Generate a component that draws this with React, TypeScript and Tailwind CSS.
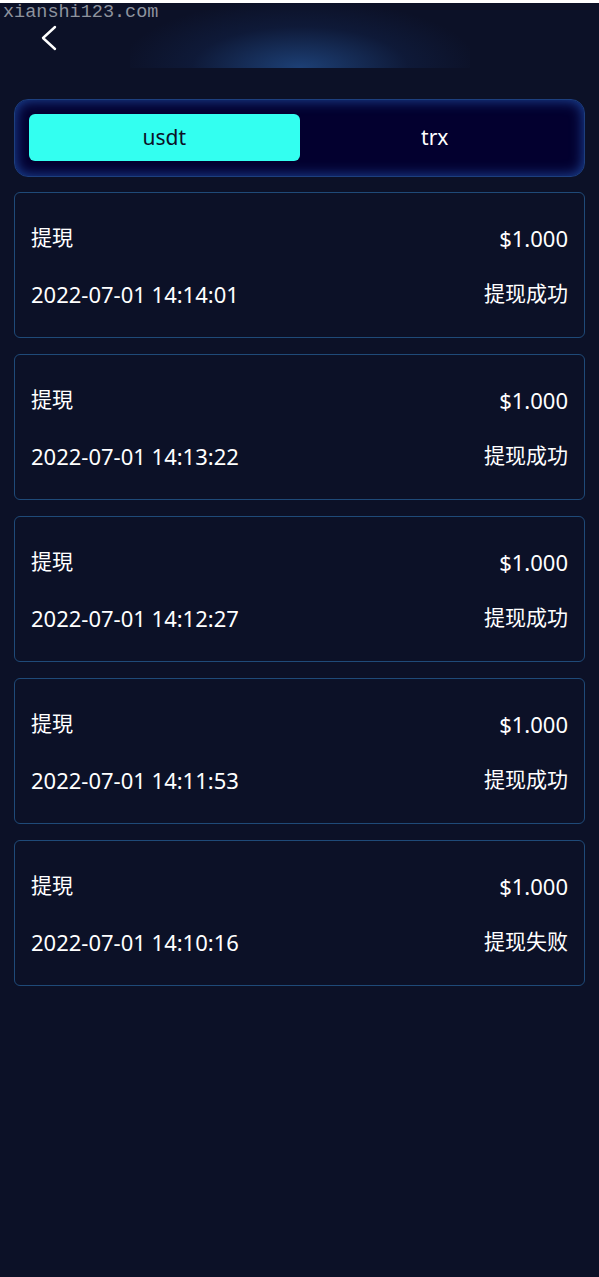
import React, { useState } from 'react';

type Record = {
    type: string;
    amount: string;
    time: string;
    status: string;
};

const records: Record[] = [
    { type: '提現', amount: '$1.000', time: '2022-07-01 14:14:01', status: '提现成功' },
    { type: '提現', amount: '$1.000', time: '2022-07-01 14:13:22', status: '提现成功' },
    { type: '提現', amount: '$1.000', time: '2022-07-01 14:12:27', status: '提现成功' },
    { type: '提現', amount: '$1.000', time: '2022-07-01 14:11:53', status: '提现成功' },
    { type: '提現', amount: '$1.000', time: '2022-07-01 14:10:16', status: '提现失败' },
];

const BackIcon = () => (
    <svg viewBox="0 0 16 26" width="16" height="26" fill="none" stroke="white" strokeWidth="2.4" strokeLinecap="round" strokeLinejoin="round">
        <polyline points="14,2 2,13 14,24" />
    </svg>
);

export default function App() {
    const [tab, setTab] = useState<'usdt' | 'trx'>('usdt');

    return (
        <div className="min-h-[1277px] bg-[#0c1127] text-white font-['Noto_Sans','Noto_Sans_CJK_SC',sans-serif]">
            {/* thin light strip from the browser capture */}
            <div className="h-[3px] bg-white" />

            {/* header */}
            <div className="relative h-[96px]">
                <div className="absolute left-[130px] top-0 w-[340px] h-[65px] bg-[radial-gradient(ellipse_at_bottom,rgba(40,95,170,0.6),rgba(20,45,95,0.3)_45%,rgba(12,17,39,0)_75%)]" />
                <button className="absolute left-[41px] top-[22px] flex">
                    <BackIcon />
                </button>
                <span className="absolute left-[3px] top-[-1px] text-[18.5px] leading-[22px] text-[#8e939e] font-['Liberation_Mono',monospace]">
                    xianshi123.com
                </span>
            </div>

            <div className="px-[14px]">
                {/* tabs */}
                <div className="grid grid-cols-2 px-[14px] pt-[14px] pb-[15px] rounded-[14px] bg-[#03002f] border border-[#1d3f7e] shadow-[inset_0_0_14px_rgba(40,100,200,0.75)]">
                    {(['usdt', 'trx'] as const).map((t) => (
                        <button
                            key={t}
                            onClick={() => setTab(t)}
                            className={`h-[47px] rounded-[6px] text-[21px] ${tab === t ? 'bg-[#33fff0] text-[#0c1127]' : 'text-white'}`}
                        >
                            {t}
                        </button>
                    ))}
                </div>

                {/* list */}
                <div className="mt-[15px] flex flex-col gap-[16px]">
                    {records.map((r, i) => (
                        <div key={i} className="border border-[#1f4a78] rounded-[6px] px-[16px] pt-[27px] pb-[25px] flex flex-col gap-[20px] text-[21px]">
                            <div className="h-[36px] flex items-center justify-between">
                                <span>{r.type}</span>
                                <span className="text-[22px]">{r.amount}</span>
                            </div>
                            <div className="h-[36px] flex items-center justify-between">
                                <span className="text-[22px]">{r.time}</span>
                                <span>{r.status}</span>
                            </div>
                        </div>
                    ))}
                </div>
            </div>
        </div>
    );
}
